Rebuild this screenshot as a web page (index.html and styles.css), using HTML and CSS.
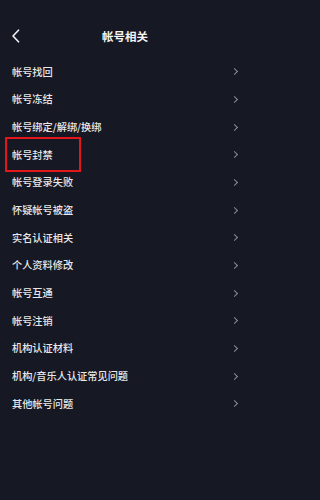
FILE: index.html
```html
<!DOCTYPE html>
<html lang="zh">
<head>
<meta charset="utf-8">
<link rel="stylesheet" href="styles.css">
</head>
<body>
<div class="page">
  <header class="topbar">
    <span class="back"><svg width="9" height="14" viewBox="0 0 9 14"><path d="M7.5 1.2 L2 7 L7.5 12.8" fill="none" stroke="#f2f2f3" stroke-width="1.6" stroke-linecap="round" stroke-linejoin="round"/></svg></span>
    <h1 class="title">帐号相关</h1>
  </header>
  <ul class="list">
    <li class="row"><span>帐号找回</span><i class="chev"></i></li>
    <li class="row"><span>帐号冻结</span><i class="chev"></i></li>
    <li class="row"><span>帐号绑定/解绑/换绑</span><i class="chev"></i></li>
    <li class="row marked"><span>帐号封禁</span><i class="chev"></i></li>
    <li class="row"><span>帐号登录失败</span><i class="chev"></i></li>
    <li class="row"><span>怀疑帐号被盗</span><i class="chev"></i></li>
    <li class="row"><span>实名认证相关</span><i class="chev"></i></li>
    <li class="row"><span>个人资料修改</span><i class="chev"></i></li>
    <li class="row"><span>帐号互通</span><i class="chev"></i></li>
    <li class="row"><span>帐号注销</span><i class="chev"></i></li>
    <li class="row"><span>机构认证材料</span><i class="chev"></i></li>
    <li class="row"><span>机构/音乐人认证常见问题</span><i class="chev"></i></li>
    <li class="row"><span>其他帐号问题</span><i class="chev"></i></li>
  </ul>
</div>
</body>
</html>
```
FILE: styles.css
```css
html, body {
  margin: 0;
  padding: 0;
  background: #161823;
}
.page {
  width: 250px;
  height: 500px;
  background: #161823;
  font-family: "Noto Sans CJK SC", "Noto Sans", sans-serif;
  color: #e8e8ea;
  overflow: hidden;
}
.topbar {
  position: relative;
  height: 58px;
  display: flex;
  align-items: flex-start;
  justify-content: center;
  padding-top: 28px;
  box-sizing: border-box;
}
.back {
  position: absolute;
  left: 11px;
  top: 29px;
  display: flex;
}
.title {
  margin: 0;
  font-size: 11.5px;
  line-height: 16px;
  font-weight: 700;
  color: #f4f4f5;
}
.list {
  list-style: none;
  margin: 0;
  padding: 0;
}
.row {
  position: relative;
  height: 27.67px;
  display: flex;
  align-items: center;
  justify-content: space-between;
  padding: 0 13px 0 12px;
  font-size: 10.2px;
  line-height: 1;
  font-weight: 500;
}
.chev {
  width: 4px;
  height: 4px;
  border-top: 1.3px solid #8b8c92;
  border-right: 1.3px solid #8b8c92;
  transform: rotate(45deg);
}
.marked::after {
  content: "";
  position: absolute;
  left: 5px;
  top: -4px;
  width: 72px;
  height: 31px;
  border: 2px solid #e3171b;
}
```
